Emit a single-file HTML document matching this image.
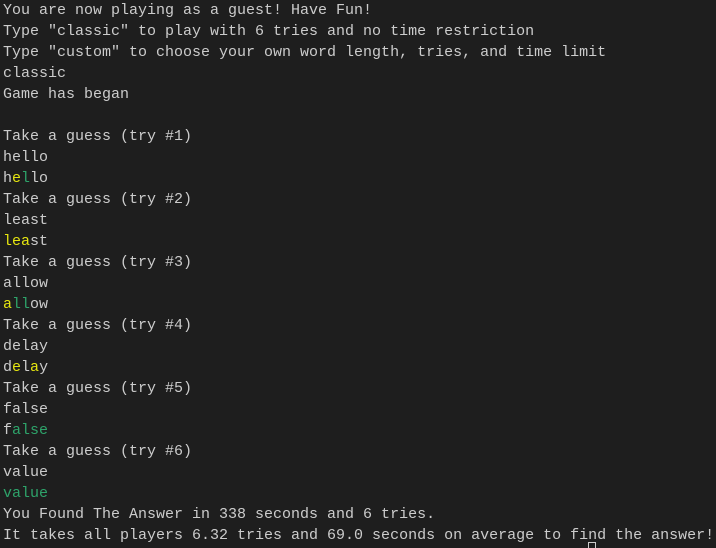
<!DOCTYPE html>
<html><head><meta charset="utf-8"><style>
html,body{margin:0;padding:0;background:#1e1e1e;width:716px;height:546px;overflow:hidden}
pre{margin:0;padding:0 0 0 3px;font-family:"Liberation Mono",monospace;font-size:15px;line-height:21px;color:#cccccc;white-space:pre}
.y{color:#e5e510}.g{color:#2ea36a}
.cur{position:absolute;left:588px;top:542px;width:8px;height:6px;border:1px solid #ccc;border-bottom:none;box-sizing:border-box}
</style></head><body><pre>You are now playing as a guest! Have Fun!
Type "classic" to play with 6 tries and no time restriction
Type "custom" to choose your own word length, tries, and time limit
classic
Game has began

Take a guess (try #1)
hello
h<span class="y">e</span><span class="g">l</span>lo
Take a guess (try #2)
least
<span class="y">lea</span>st
Take a guess (try #3)
allow
<span class="y">a</span><span class="g">ll</span>ow
Take a guess (try #4)
delay
d<span class="y">e</span>l<span class="y">a</span>y
Take a guess (try #5)
false
f<span class="g">alse</span>
Take a guess (try #6)
value
<span class="g">value</span>
You Found The Answer in 338 seconds and 6 tries.
It takes all players 6.32 tries and 69.0 seconds on average to find the answer!</pre><div class="cur"></div></body></html>
